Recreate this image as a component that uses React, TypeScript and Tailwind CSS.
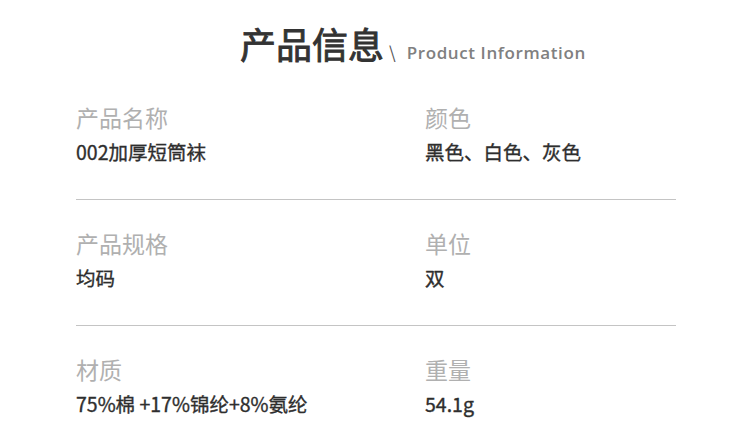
const font = { fontFamily: '"Noto Sans CJK SC", "Noto Sans", sans-serif' };

const rows = [
  [
    { label: "产品名称", value: "002加厚短筒袜" },
    { label: "颜色", value: "黑色、白色、灰色" },
  ],
  [
    { label: "产品规格", value: "均码" },
    { label: "单位", value: "双" },
  ],
  [
    { label: "材质", value: "75%棉 +17%锦纶+8%氨纶" },
    { label: "重量", value: "54.1g" },
  ],
];

export default function App() {
  return (
    <div className="w-[750px] h-[443px] bg-white overflow-hidden" style={font}>
      <div className="flex items-baseline pt-[18px] pb-[6px] pl-[240px]">
        <span className="text-[36px] leading-[50px] text-[#333] [-webkit-text-stroke:0.9px_#333]">
          产品信息
        </span>
        <span className="text-[17px] text-[#555] ml-[5px] mr-[11px]">\</span>
        <span
          className="text-[17px] font-semibold tracking-[0.6px] text-[#808080]"
          style={{ fontFamily: '"Open Sans", "Noto Sans", sans-serif' }}
        >
          Product Information
        </span>
      </div>
      <div className="ml-[76px] w-[600px]">
        {rows.map((row, i) => (
          <div
            key={i}
            className={`grid grid-cols-2 pt-[28px] pb-[34px] ${
              i < rows.length - 1 ? "border-b border-[#c4c4c4]" : ""
            }`}
          >
            {row.map((cell, j) => (
              <div key={j} className={`flex flex-col gap-[7px] ${j === 1 ? "pl-[49px]" : ""}`}>
                <div className="text-[23px] leading-[30px] text-[#b0b0b0]">{cell.label}</div>
                <div className="text-[19.5px] leading-[26px] text-[#2e2e2e] [-webkit-text-stroke:0.35px_#2e2e2e]">
                  {cell.value}
                </div>
              </div>
            ))}
          </div>
        ))}
      </div>
    </div>
  );
}
